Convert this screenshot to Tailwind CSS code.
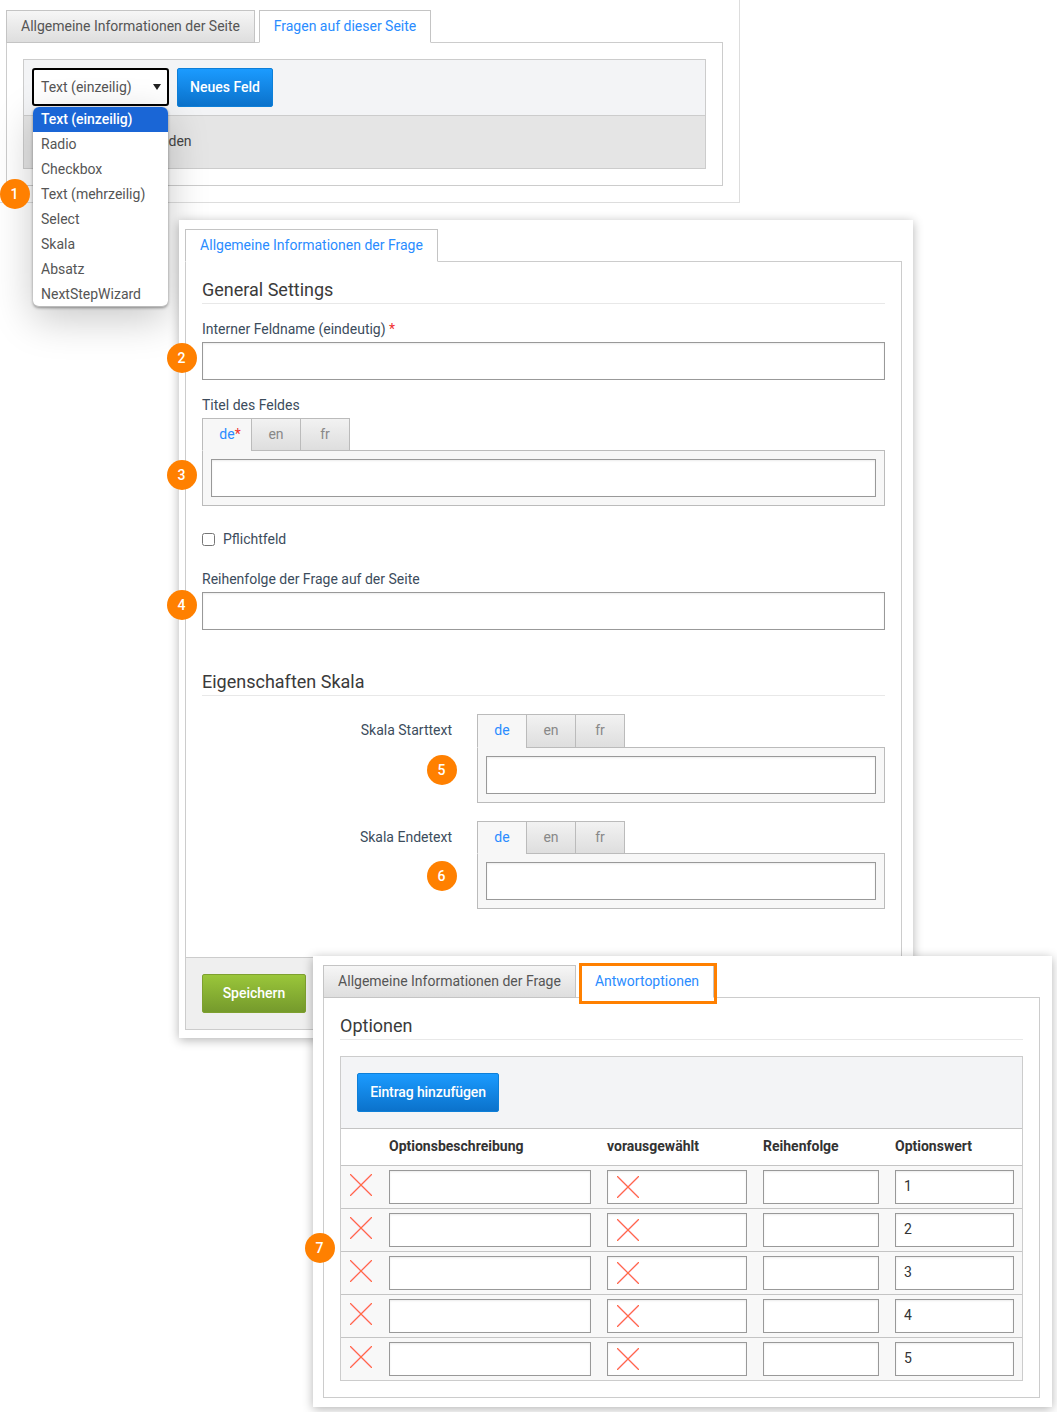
<!DOCTYPE html>
<html lang="de">
<head>
<meta charset="utf-8">
<title>Formular</title>
<script src="https://cdn.jsdelivr.net/npm/@tailwindcss/browser@4"></script>
</head>
<body class="bg-white font-['Roboto',sans-serif] text-[14px] leading-[20px] text-[#444]">
<div class="relative w-[1057px] h-[1412px] overflow-hidden">

  <!-- Fenster 1: Seite -->
  <div class="absolute left-0 top-0 w-[740px] h-[203px] bg-white border-r border-b border-[#ddd] pl-[6px] pt-[10px]">
    <div class="flex gap-[4px] -mb-px relative">
      <div class="h-[33px] w-[249px] pb-[2px] flex items-center justify-center border border-[#c4c4c4] bg-gradient-to-b from-[#f6f6f6] to-[#dedede] text-[#555]">Allgemeine Informationen der Seite</div>
      <div class="h-[33px] w-[172px] pb-[2px] flex items-center justify-center border border-[#c4c4c4] border-b-white bg-white text-[#2a8cff]">Fragen auf dieser Seite</div>
    </div>
    <div class="w-[717px] h-[144px] border border-[#ccc] p-[16px]">
      <div class="h-[110px] border border-[#ccc]">
        <div class="h-[56px] bg-[#f3f4f6] border-b border-[#ccc] flex gap-[8px] pl-[8px] pt-[8px]">
          <div class="h-[38px] w-[137px] border-2 border-black rounded-[3px] bg-white flex items-center justify-between pl-[7px] pr-[6px] text-[#555]">
            <span>Text (einzeilig)</span>
            <svg class="w-[8px] h-[6px]" viewBox="0 0 8 6"><path d="M0 0h8L4 6z" fill="#222"/></svg>
          </div>
          <div class="h-[39px] w-[96px] pb-[2px] rounded-[2px] border border-[#0d7fd8] bg-gradient-to-b from-[#1b9bff] to-[#0b72cb] text-white font-medium flex items-center justify-center">Neues Feld</div>
        </div>
        <div class="h-[52px] pb-[2px] bg-[#e5e5e5] flex items-center pl-[22px] text-[#444]">Keine Felder vorhanden</div>
      </div>
    </div>
  </div>

  <!-- Dropdown -->
  <ul class="absolute left-[33px] top-[107px] w-[135px] h-[200px] bg-white rounded-[6px] overflow-hidden border-b border-[#bbb] shadow-[0_1px_3px_rgba(0,0,0,0.4),0_12px_40px_rgba(0,0,0,0.22)] text-[#555]">
    <li class="h-[25px] pb-[2px] pl-[8px] flex items-center bg-[#1a66d6] text-white font-medium tracking-[-0.05px]">Text (einzeilig)</li>
    <li class="h-[25px] pb-[2px] pl-[8px] flex items-center">Radio</li>
    <li class="h-[25px] pb-[2px] pl-[8px] flex items-center">Checkbox</li>
    <li class="h-[25px] pb-[2px] pl-[8px] flex items-center">Text (mehrzeilig)</li>
    <li class="h-[25px] pb-[2px] pl-[8px] flex items-center">Select</li>
    <li class="h-[25px] pb-[2px] pl-[8px] flex items-center">Skala</li>
    <li class="h-[25px] pb-[2px] pl-[8px] flex items-center">Absatz</li>
    <li class="h-[25px] pb-[2px] pl-[8px] flex items-center">NextStepWizard</li>
  </ul>

  <!-- Fenster 2: Frage -->
  <div class="absolute left-[179px] top-[220px] w-[734px] h-[818px] bg-white shadow-[0_2px_10px_rgba(0,0,0,0.3)] pl-[6px] pt-[9px]">
    <div class="flex -mb-px relative">
      <div class="h-[33px] w-[253px] pb-[2px] flex items-center justify-center border border-[#c4c4c4] border-b-white bg-white text-[#2a8cff]">Allgemeine Informationen der Frage</div>
    </div>
    <div class="w-[717px] h-[769px] border border-[#ccc] flex flex-col">
      <div class="px-[16px]">
        <h2 class="h-[42px] pt-[17px] text-[18px] leading-[22px] text-[#3a3a3a] border-b border-[#e8e8e8]">General Settings</h2>
        <div class="mt-[15px] mb-[3px] text-[#3c4c5c]">Interner Feldname (eindeutig) <span class="text-[#f03030]">*</span></div>
        <input class="block w-[683px] h-[38px] border border-[#999] bg-white shadow-[inset_0_1px_2px_rgba(0,0,0,0.08)]">
        <div class="mt-[15px] mb-[3px] text-[#3c4c5c]">Titel des Feldes</div>
        <div class="flex relative -mb-px">
          <div class="h-[33px] w-[50px] pb-[2px] flex items-center justify-center border border-[#bbb] border-b-[#f7f7f7] bg-[#f7f7f7] text-[#2a8cff]"><span class="relative">de<span class="absolute left-full text-[#f03030]">*</span></span></div>
          <div class="h-[33px] w-[50px] pb-[2px] -ml-px flex items-center justify-center border border-[#bbb] bg-gradient-to-b from-[#f2f2f2] to-[#dedede] text-[#888]">en</div>
          <div class="h-[33px] w-[50px] pb-[2px] -ml-px flex items-center justify-center border border-[#bbb] bg-gradient-to-b from-[#f2f2f2] to-[#dedede] text-[#888]">fr</div>
        </div>
        <div class="w-[683px] h-[56px] border border-[#bbb] bg-[#f7f7f7] p-[8px]">
          <input class="block w-full h-[38px] border border-[#999] bg-white shadow-[inset_0_1px_2px_rgba(0,0,0,0.08)]">
        </div>
        <label class="mt-[23px] flex items-center h-[20px] text-[#3c4c5c]">
          <input type="checkbox" class="w-[13px] h-[13px] mr-[8px]">
          <span>Pflichtfeld</span>
        </label>
        <div class="mt-[20px] mb-[3px] text-[#3c4c5c]">Reihenfolge der Frage auf der Seite</div>
        <input class="block w-[683px] h-[38px] border border-[#999] bg-white shadow-[inset_0_1px_2px_rgba(0,0,0,0.08)]">
        <h2 class="mt-[41px] h-[25px] text-[18px] leading-[22px] text-[#3a3a3a] border-b border-[#e8e8e8]">Eigenschaften Skala</h2>
        <div class="mt-[18px] flex">
          <div class="w-[250px] mr-[25px] pt-[6px] text-right text-[#3c4c5c]">Skala Starttext</div>
          <div class="w-[408px]">
            <div class="flex relative -mb-px">
              <div class="h-[34px] w-[50px] pb-[2px] flex items-center justify-center border border-[#bbb] border-b-[#f7f7f7] bg-[#f7f7f7] text-[#2a8cff]">de</div>
              <div class="h-[34px] w-[50px] pb-[2px] -ml-px flex items-center justify-center border border-[#bbb] bg-gradient-to-b from-[#f2f2f2] to-[#dedede] text-[#888]">en</div>
              <div class="h-[34px] w-[50px] pb-[2px] -ml-px flex items-center justify-center border border-[#bbb] bg-gradient-to-b from-[#f2f2f2] to-[#dedede] text-[#888]">fr</div>
            </div>
            <div class="h-[56px] border border-[#bbb] bg-[#f7f7f7] p-[8px]">
              <input class="block w-full h-[38px] border border-[#999] bg-white shadow-[inset_0_1px_2px_rgba(0,0,0,0.08)]">
            </div>
          </div>
        </div>
        <div class="mt-[18px] flex">
          <div class="w-[250px] mr-[25px] pt-[6px] text-right text-[#3c4c5c]">Skala Endetext</div>
          <div class="w-[408px]">
            <div class="flex relative -mb-px">
              <div class="h-[33px] w-[50px] pb-[2px] flex items-center justify-center border border-[#bbb] border-b-[#f7f7f7] bg-[#f7f7f7] text-[#2a8cff]">de</div>
              <div class="h-[33px] w-[50px] pb-[2px] -ml-px flex items-center justify-center border border-[#bbb] bg-gradient-to-b from-[#f2f2f2] to-[#dedede] text-[#888]">en</div>
              <div class="h-[33px] w-[50px] pb-[2px] -ml-px flex items-center justify-center border border-[#bbb] bg-gradient-to-b from-[#f2f2f2] to-[#dedede] text-[#888]">fr</div>
            </div>
            <div class="h-[56px] border border-[#bbb] bg-[#f7f7f7] p-[8px]">
              <input class="block w-full h-[38px] border border-[#999] bg-white shadow-[inset_0_1px_2px_rgba(0,0,0,0.08)]">
            </div>
          </div>
        </div>
      </div>
      <div class="mt-auto h-[72px] border-t border-[#ccc] bg-[#efefef] pl-[16px] pt-[16px]">
        <div class="h-[39px] w-[104px] pb-[2px] rounded-[2px] border border-[#7ea02f] bg-gradient-to-b from-[#9ac63a] to-[#759a2c] text-white font-medium flex items-center justify-center">Speichern</div>
      </div>
    </div>
  </div>

  <!-- Fenster 3: Antwortoptionen -->
  <div class="absolute left-[313px] top-[956px] w-[739px] h-[451px] bg-white shadow-[0_2px_10px_rgba(0,0,0,0.3)] pl-[10px] pt-[9px]">
    <div class="flex gap-[4px] -mb-px relative">
      <div class="h-[33px] w-[253px] pb-[2px] flex items-center justify-center border border-[#c4c4c4] bg-gradient-to-b from-[#f6f6f6] to-[#dedede] text-[#555]">Allgemeine Informationen der Frage</div>
      <div class="h-[33px] w-[134px] pb-[2px] flex items-center justify-center border border-[#c4c4c4] border-b-white bg-white text-[#2a8cff]">Antwortoptionen</div>
      <div class="absolute left-[256px] -top-[2px] w-[138px] h-[41px] border-[3px] border-[#ff8000]"></div>
    </div>
    <div class="w-[717px] h-[401px] border border-[#ccc] px-[16px]">
      <h2 class="h-[42px] pt-[17px] text-[18px] leading-[22px] text-[#3a3a3a] border-b border-[#e8e8e8]">Optionen</h2>
      <div class="mt-[16px] w-[683px] h-[325px] border border-[#ccc] bg-[#f8f8f8]">
        <div class="h-[71px] bg-[#f3f4f6] pl-[16px] pt-[16px]">
          <div class="h-[39px] w-[142px] pb-[2px] rounded-[2px] border border-[#0d7fd8] bg-gradient-to-b from-[#1b9bff] to-[#0b72cb] text-white font-medium tracking-[-0.1px] flex items-center justify-center">Eintrag hinzufügen</div>
        </div>
        <div class="h-[37px] pb-[2px] border-t border-[#c4c4c4] bg-white pl-[48px] flex items-center gap-[16px] font-bold text-[#333]">
          <div class="w-[202px]">Optionsbeschreibung</div>
          <div class="w-[140px]">vorausgewählt</div>
          <div class="w-[116px]">Reihenfolge</div>
          <div class="w-[119px]">Optionswert</div>
        </div>
        <div class="h-[43px] border-t border-[#c4c4c4] pt-[4px] flex">
          <div class="w-[48px] pl-[9px] pt-[4px] shrink-0"><svg class="w-[22px] h-[22px]" viewBox="0 0 22 22" fill="none"><path d="M0 0l22 22M22 0L0 22" stroke="#ff8aa0" stroke-width="1.6"/><path d="M0 0l22 22M22 0L0 22" stroke="#ff7030" stroke-width="0.9"/></svg></div>
          <input class="block w-[202px] h-[34px] border border-[#999] bg-white shadow-[inset_0_1px_2px_rgba(0,0,0,0.08)]">
          <div class="relative w-[140px] ml-[16px]">
            <input class="block w-full h-[34px] border border-[#999] bg-white shadow-[inset_0_1px_2px_rgba(0,0,0,0.08)]">
            <svg class="absolute left-[10px] top-[6px] w-[22px] h-[22px]" viewBox="0 0 22 22" fill="none"><path d="M0 0l22 22M22 0L0 22" stroke="#ff8aa0" stroke-width="1.6"/><path d="M0 0l22 22M22 0L0 22" stroke="#ff7030" stroke-width="0.9"/></svg>
          </div>
          <input class="block w-[116px] h-[34px] ml-[16px] border border-[#999] bg-white shadow-[inset_0_1px_2px_rgba(0,0,0,0.08)]">
          <input value="1" class="block w-[119px] h-[34px] pb-[2px] ml-[16px] border border-[#999] bg-white pl-[8px] text-[#333] shadow-[inset_0_1px_2px_rgba(0,0,0,0.08)]">
        </div>
        <div class="h-[43px] border-t border-[#c4c4c4] pt-[4px] flex">
          <div class="w-[48px] pl-[9px] pt-[4px] shrink-0"><svg class="w-[22px] h-[22px]" viewBox="0 0 22 22" fill="none"><path d="M0 0l22 22M22 0L0 22" stroke="#ff8aa0" stroke-width="1.6"/><path d="M0 0l22 22M22 0L0 22" stroke="#ff7030" stroke-width="0.9"/></svg></div>
          <input class="block w-[202px] h-[34px] border border-[#999] bg-white shadow-[inset_0_1px_2px_rgba(0,0,0,0.08)]">
          <div class="relative w-[140px] ml-[16px]">
            <input class="block w-full h-[34px] border border-[#999] bg-white shadow-[inset_0_1px_2px_rgba(0,0,0,0.08)]">
            <svg class="absolute left-[10px] top-[6px] w-[22px] h-[22px]" viewBox="0 0 22 22" fill="none"><path d="M0 0l22 22M22 0L0 22" stroke="#ff8aa0" stroke-width="1.6"/><path d="M0 0l22 22M22 0L0 22" stroke="#ff7030" stroke-width="0.9"/></svg>
          </div>
          <input class="block w-[116px] h-[34px] ml-[16px] border border-[#999] bg-white shadow-[inset_0_1px_2px_rgba(0,0,0,0.08)]">
          <input value="2" class="block w-[119px] h-[34px] pb-[2px] ml-[16px] border border-[#999] bg-white pl-[8px] text-[#333] shadow-[inset_0_1px_2px_rgba(0,0,0,0.08)]">
        </div>
        <div class="h-[43px] border-t border-[#c4c4c4] pt-[4px] flex">
          <div class="w-[48px] pl-[9px] pt-[4px] shrink-0"><svg class="w-[22px] h-[22px]" viewBox="0 0 22 22" fill="none"><path d="M0 0l22 22M22 0L0 22" stroke="#ff8aa0" stroke-width="1.6"/><path d="M0 0l22 22M22 0L0 22" stroke="#ff7030" stroke-width="0.9"/></svg></div>
          <input class="block w-[202px] h-[34px] border border-[#999] bg-white shadow-[inset_0_1px_2px_rgba(0,0,0,0.08)]">
          <div class="relative w-[140px] ml-[16px]">
            <input class="block w-full h-[34px] border border-[#999] bg-white shadow-[inset_0_1px_2px_rgba(0,0,0,0.08)]">
            <svg class="absolute left-[10px] top-[6px] w-[22px] h-[22px]" viewBox="0 0 22 22" fill="none"><path d="M0 0l22 22M22 0L0 22" stroke="#ff8aa0" stroke-width="1.6"/><path d="M0 0l22 22M22 0L0 22" stroke="#ff7030" stroke-width="0.9"/></svg>
          </div>
          <input class="block w-[116px] h-[34px] ml-[16px] border border-[#999] bg-white shadow-[inset_0_1px_2px_rgba(0,0,0,0.08)]">
          <input value="3" class="block w-[119px] h-[34px] pb-[2px] ml-[16px] border border-[#999] bg-white pl-[8px] text-[#333] shadow-[inset_0_1px_2px_rgba(0,0,0,0.08)]">
        </div>
        <div class="h-[43px] border-t border-[#c4c4c4] pt-[4px] flex">
          <div class="w-[48px] pl-[9px] pt-[4px] shrink-0"><svg class="w-[22px] h-[22px]" viewBox="0 0 22 22" fill="none"><path d="M0 0l22 22M22 0L0 22" stroke="#ff8aa0" stroke-width="1.6"/><path d="M0 0l22 22M22 0L0 22" stroke="#ff7030" stroke-width="0.9"/></svg></div>
          <input class="block w-[202px] h-[34px] border border-[#999] bg-white shadow-[inset_0_1px_2px_rgba(0,0,0,0.08)]">
          <div class="relative w-[140px] ml-[16px]">
            <input class="block w-full h-[34px] border border-[#999] bg-white shadow-[inset_0_1px_2px_rgba(0,0,0,0.08)]">
            <svg class="absolute left-[10px] top-[6px] w-[22px] h-[22px]" viewBox="0 0 22 22" fill="none"><path d="M0 0l22 22M22 0L0 22" stroke="#ff8aa0" stroke-width="1.6"/><path d="M0 0l22 22M22 0L0 22" stroke="#ff7030" stroke-width="0.9"/></svg>
          </div>
          <input class="block w-[116px] h-[34px] ml-[16px] border border-[#999] bg-white shadow-[inset_0_1px_2px_rgba(0,0,0,0.08)]">
          <input value="4" class="block w-[119px] h-[34px] pb-[2px] ml-[16px] border border-[#999] bg-white pl-[8px] text-[#333] shadow-[inset_0_1px_2px_rgba(0,0,0,0.08)]">
        </div>
        <div class="h-[43px] border-t border-[#c4c4c4] pt-[4px] flex">
          <div class="w-[48px] pl-[9px] pt-[4px] shrink-0"><svg class="w-[22px] h-[22px]" viewBox="0 0 22 22" fill="none"><path d="M0 0l22 22M22 0L0 22" stroke="#ff8aa0" stroke-width="1.6"/><path d="M0 0l22 22M22 0L0 22" stroke="#ff7030" stroke-width="0.9"/></svg></div>
          <input class="block w-[202px] h-[34px] border border-[#999] bg-white shadow-[inset_0_1px_2px_rgba(0,0,0,0.08)]">
          <div class="relative w-[140px] ml-[16px]">
            <input class="block w-full h-[34px] border border-[#999] bg-white shadow-[inset_0_1px_2px_rgba(0,0,0,0.08)]">
            <svg class="absolute left-[10px] top-[6px] w-[22px] h-[22px]" viewBox="0 0 22 22" fill="none"><path d="M0 0l22 22M22 0L0 22" stroke="#ff8aa0" stroke-width="1.6"/><path d="M0 0l22 22M22 0L0 22" stroke="#ff7030" stroke-width="0.9"/></svg>
          </div>
          <input class="block w-[116px] h-[34px] ml-[16px] border border-[#999] bg-white shadow-[inset_0_1px_2px_rgba(0,0,0,0.08)]">
          <input value="5" class="block w-[119px] h-[34px] pb-[2px] ml-[16px] border border-[#999] bg-white pl-[8px] text-[#333] shadow-[inset_0_1px_2px_rgba(0,0,0,0.08)]">
        </div>
      </div>
    </div>
  </div>

  <!-- Nummern -->
  <div class="absolute left-0 top-[179px] w-[30px] h-[30px] pr-px rounded-full bg-[#ff8000] text-white font-medium flex items-center justify-center">1</div>
  <div class="absolute left-[167px] top-[343px] w-[30px] h-[30px] pr-px rounded-full bg-[#ff8000] text-white font-medium flex items-center justify-center">2</div>
  <div class="absolute left-[167px] top-[460px] w-[30px] h-[30px] pr-px rounded-full bg-[#ff8000] text-white font-medium flex items-center justify-center">3</div>
  <div class="absolute left-[167px] top-[590px] w-[30px] h-[30px] pr-px rounded-full bg-[#ff8000] text-white font-medium flex items-center justify-center">4</div>
  <div class="absolute left-[427px] top-[755px] w-[30px] h-[30px] pr-px rounded-full bg-[#ff8000] text-white font-medium flex items-center justify-center">5</div>
  <div class="absolute left-[427px] top-[861px] w-[30px] h-[30px] pr-px rounded-full bg-[#ff8000] text-white font-medium flex items-center justify-center">6</div>
  <div class="absolute left-[305px] top-[1233px] w-[30px] h-[30px] pr-px rounded-full bg-[#ff8000] text-white font-medium flex items-center justify-center">7</div>
</div>
</body>
</html>
